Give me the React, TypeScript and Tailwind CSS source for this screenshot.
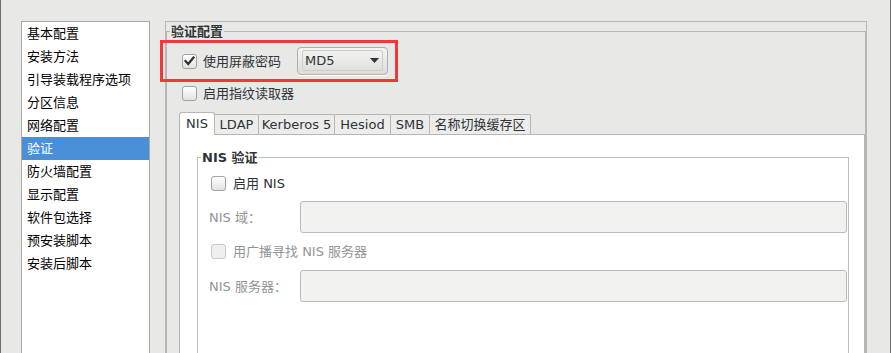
import React from "react";

const font = "font-['DejaVu_Sans','Noto_Sans_CJK_SC',sans-serif]";

function CheckBox({ checked = false, disabled = false }: { checked?: boolean; disabled?: boolean }) {
  return (
    <span
      className={
        disabled
          ? "flex h-[15px] w-[15px] shrink-0 items-center justify-center rounded-[3px] border border-[#c9c9c7] bg-[#efefee]"
          : "flex h-[15px] w-[15px] shrink-0 items-center justify-center rounded-[3px] border border-[#a1a1a0] bg-gradient-to-b from-[#ffffff] to-[#e2e2e0]"
      }
    >
      {checked && (
        <svg width="11" height="10" viewBox="0 0 11 10">
          <path d="M1.5 5 L4.2 8 L9.5 1.5" fill="none" stroke="#2e3436" strokeWidth="2.2" strokeLinecap="square" />
        </svg>
      )}
    </span>
  );
}

const sideItems = [
  "基本配置",
  "安装方法",
  "引导装载程序选项",
  "分区信息",
  "网络配置",
  "验证",
  "防火墙配置",
  "显示配置",
  "软件包选择",
  "预安装脚本",
  "安装后脚本",
];

const tabs = [
  { label: "LDAP", w: "w-[45px]" },
  { label: "Kerberos 5", w: "w-[77px]" },
  { label: "Hesiod", w: "w-[57px]" },
  { label: "SMB", w: "w-[40px]" },
  { label: "名称切换缓存区", w: "w-[102px]" },
];

export default function App() {
  return (
    <div
      className={`relative flex h-[353px] w-[891px] flex-col overflow-hidden border-l border-r border-[#6e6e6e] bg-[#e8e8e7] text-[13px] text-[#2e3436] ${font}`}
    >
      <div className="mt-px h-px bg-[#d0d0ce]" />
      <div className="ml-[20px] mt-[20px] flex items-start">
        {/* Sidebar list */}
        <div className="h-[340px] w-[129px] shrink-0 border border-[#a9a9a7] bg-white text-black">
          {sideItems.map((it) => (
            <div
              key={it}
              className={
                it === "验证"
                  ? "h-[23px] bg-[#4a90d9] pl-[5px] leading-[23px] text-white"
                  : "h-[23px] pl-[5px] leading-[23px]"
              }
            >
              {it}
            </div>
          ))}
        </div>

        {/* Main viewport */}
        <div className="ml-[15px] h-[340px] w-[702px] shrink-0 border-l border-r border-t border-[#b6b6b4] pt-[2px]">
          <fieldset className="h-[400px] border border-[#b6b6b4]">
            <legend className="ml-[3px] px-px text-[13px] font-bold leading-[15px] text-[#2e3436]">验证配置</legend>

            <div className="mt-[8px] flex h-[28px] items-center pl-[15px]">
              <CheckBox checked />
              <span className="ml-[6px] leading-[15px]">使用屏蔽密码</span>
              <div className="ml-[16px] h-[28px] w-[91px] rounded-[4px] border border-[#afafad] bg-gradient-to-b from-[#f5f5f4] to-[#dcdcda] shadow-[0_1px_0_#ffffff]">
                <div className="ml-[4px] mt-[2px] flex h-[21px] w-[81px] items-center justify-between rounded-[2px] border border-[#cbcbc9] pl-[2px] pr-[3px]">
                  <span className="leading-[15px]">MD5</span>
                  <svg width="9" height="5" viewBox="0 0 9 5">
                    <polygon points="0,0 9,0 4.5,5" fill="#2e3436" />
                  </svg>
                </div>
              </div>
            </div>

            <div className="mt-[11px] flex h-[15px] items-center pl-[15px]">
              <CheckBox />
              <span className="ml-[6px] leading-[15px]">启用指纹读取器</span>
            </div>

            {/* Notebook */}
            <div className="ml-[12px] mt-[11px] flex flex-col">
              <div className="flex h-[22px] items-end">
                <div className="relative z-10 -mb-px flex h-[23px] w-[36px] items-start justify-center rounded-t-[3px] border-l border-r border-t border-[#b6b6b4] bg-white pt-[3px] leading-[15px]">
                  NIS
                </div>
                {tabs.map((t) => (
                  <div
                    key={t.label}
                    className={`-ml-px flex h-[20px] ${t.w} items-center justify-center rounded-t-[2px] border-l border-r border-t border-[#b6b6b4] bg-[#ececeb] leading-[15px]`}
                  >
                    {t.label}
                  </div>
                ))}
              </div>
              <div className="h-[260px] border-l border-r border-t border-[#b6b6b4] bg-white pt-[15px]">
                <fieldset className="ml-[17px] mr-[15px] h-[240px] border border-[#bdbdbb]">
                  <legend className="ml-[3px] px-px text-[13px] font-bold leading-[15px] text-[#2e3436]">NIS 验证</legend>
                  <div className="flex flex-col pl-[11px] pr-px">
                    <div className="ml-[2px] mt-[11px] flex h-[15px] items-center">
                      <CheckBox />
                      <span className="ml-[7px] leading-[15px]">启用 NIS</span>
                    </div>
                    <div className="mt-[10px] flex h-[32px] items-center">
                      <span className="w-[91px] shrink-0 leading-[15px] text-[#929595]">NIS 域：</span>
                      <div className="h-[32px] flex-1 rounded-[3px] border border-[#b9b9b7] bg-[#f2f2f1]" />
                    </div>
                    <div className="ml-[2px] mt-[11px] flex h-[15px] items-center">
                      <CheckBox disabled />
                      <span className="ml-[7px] leading-[15px] text-[#929595]">用广播寻找 NIS 服务器</span>
                    </div>
                    <div className="mt-[11px] flex h-[32px] items-center">
                      <span className="w-[91px] shrink-0 leading-[15px] text-[#929595]">NIS 服务器：</span>
                      <div className="h-[32px] flex-1 rounded-[3px] border border-[#b9b9b7] bg-[#f2f2f1]" />
                    </div>
                  </div>
                </fieldset>
              </div>
            </div>
          </fieldset>
        </div>
      </div>

      {/* red annotation box */}
      <div className="pointer-events-none absolute left-[159px] top-[40px] h-[42px] w-[238px] border-[3px] border-[#f2383a]" />
    </div>
  );
}
